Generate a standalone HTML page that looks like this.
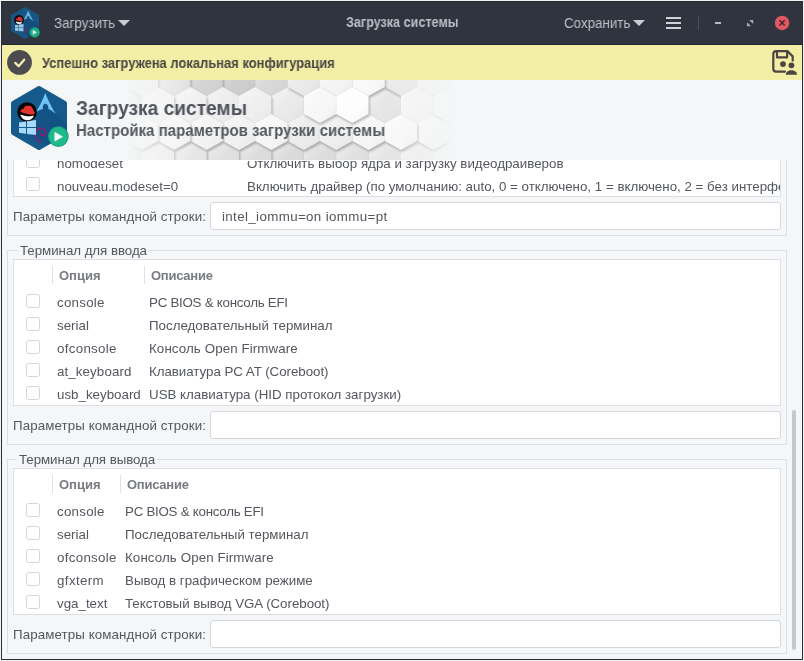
<!DOCTYPE html>
<html lang="ru">
<head>
<meta charset="utf-8">
<title>Загрузка системы</title>
<style>
html,body{margin:0;padding:0;}
body{width:804px;height:661px;overflow:hidden;background:#f1f2f4;font-family:"Liberation Sans",sans-serif;font-size:13.33px;color:#54575e;position:relative;}
.abs,.t{position:absolute;}
.t{will-change:transform;white-space:nowrap;line-height:16px;height:16px;transform-origin:0 50%;}
.b{font-weight:bold;}
#win{position:absolute;left:1px;top:1px;width:802px;height:659px;background:#f5f6f7;overflow:hidden;}
#winborder{position:absolute;left:1px;top:1px;width:800px;height:657px;border:1px solid #292c35;border-top-color:#252830;pointer-events:none;z-index:50;}
#titlebar{position:absolute;left:1px;top:1px;width:802px;height:44px;background:#2f343f;}
#titlebar .t{color:#bec1c7;font-size:14px;}
#info{position:absolute;left:2px;top:45px;width:800px;height:35px;background:#f3eea6;}
#banner{position:absolute;left:2px;top:80px;width:800px;height:80px;background:#f5f6f7;overflow:hidden;}
#view{position:absolute;left:2px;top:160px;width:800px;height:499px;background:#f5f6f7;overflow:hidden;}
.frame{position:absolute;border:1px solid #dcdfe3;box-sizing:border-box;}
.tree{position:absolute;background:#fff;border:1px solid #dcdfe3;box-sizing:border-box;overflow:hidden;}
.entry{position:absolute;background:#fff;border:1px solid #d3d6db;border-radius:3px;box-sizing:border-box;}
.cb{position:absolute;width:14px;height:14px;box-sizing:border-box;border:1px solid #d4d6da;border-radius:2.5px;background:#fefefe;}
.hd{color:#787b82;font-weight:bold;font-size:13px;}
.sep{position:absolute;width:1px;background:#dfe1e5;}
.lbl{background:#f5f6f7;padding:0 2px;}
</style>
</head>
<body>
<div id="win"></div>


<!-- ===== title bar ===== -->
<div id="titlebar">
  <svg class="abs" style="left:8px;top:6px;opacity:.9" width="32" height="32" viewBox="0 0 64 64">
   <path d="M32 2.2 L57.8 17.2 V46.8 L32 61.8 L6.2 46.8 V17.2 Z" fill="#165a8b" stroke="#165a8b" stroke-width="4.4" stroke-linejoin="round"/>
   <path d="M38.5 17 L60 38 V48 L40 59.6 L22 48.6 L29 25 Z" fill="#114f7d" opacity="0.55"/>
   <!-- arch -->
   <path d="M38.2 7 C36.2 13 33 19.5 29 26 C31.600 24.600 33.800 23.600 35.900 23.100 C35.300 19.800 36.800 17.800 38.400 17.800 C40 17.800 41.700 19.800 41.400 23.100 C43.6 23.8 46 25.6 48.6 27.8 C44.6 21 41 14 38.2 7 Z" fill="#6fc3f7"/>
   <!-- red hat -->
   <circle cx="20" cy="26" r="9.8" fill="#0b0709"/>
   <path d="M13.4 25.6 C13.8 23.4 15.6 22.4 16.9 22.8 C17.1 20.5 19 19.4 20.8 19.9 C22.9 19.2 25.1 20.3 25.7 22.7 C26.3 24.5 27.1 25.7 28.2 26.7 C27.3 28.6 24.400 29 22 28.300 C19 27.600 15.500 27.100 13.400 25.600 Z" fill="#e8322d"/>
   <path d="M13.300 28.800 C15.600 28.900 18 30.100 20.400 30.300 C22.800 30.500 25.200 29.900 26.900 29.500 C26.200 32.300 23.600 34.300 20.400 34.300 C17 34.300 14.300 32.100 13.300 28.800 Z" fill="#fbfbfb"/>
   <!-- windows -->
   <path d="M12 36.4 L19 35.4 V41 H12 Z M20 35.2 L29 34 V41 H20 Z M12 42 H19 V47.8 L12 46.8 Z M20 42 H29 V49 L20 47.9 Z" fill="#a9d9f9"/>
   <!-- debian -->
   <path d="M29.8 44.8 C31 42.2 35.4 41.4 37.6 43.6 C39.6 45.6 38.6 49.2 36.2 49.6 C34.6 49.8 33.6 48.4 34.4 47.2" fill="none" stroke="#8c1f6c" stroke-width="1.6" stroke-linecap="round"/>
   <path d="M28.6 49.4 C29.4 52.6 31.2 55 33.6 56.4" fill="none" stroke="#8a2170" stroke-width="1.5" stroke-linecap="round"/>
   <!-- play -->
   <circle cx="51.4" cy="50.6" r="10.3" fill="#1aa57c"/>
   <circle cx="51.4" cy="50.6" r="9.3" fill="#20b98b"/>
   <path d="M47.9 46.5 V54.9 L55.4 50.7 Z" fill="#f2fffb" stroke="#f2fffb" stroke-width="0.8" stroke-linejoin="round"/>
  </svg>
  <div class="t" style="left:53px;top:14px;transform:scaleX(.955);">Загрузить</div>
  <svg class="abs" style="left:116px;top:18px" width="14" height="8" viewBox="0 0 14 8"><path d="M1 1h12l-6 6z" fill="#c9ccd1"/></svg>
  <div class="t b" style="left:344.6px;top:13px;color:#bcbfc7;transform:scaleX(.9);">Загрузка системы</div>
  <div class="t" style="left:562.8px;top:14px;transform:scaleX(.955);">Сохранить</div>
  <svg class="abs" style="left:631px;top:18px" width="14" height="8" viewBox="0 0 14 8"><path d="M1 1h12l-6 6z" fill="#c9ccd1"/></svg>
  <div class="abs" style="left:665px;top:16px;width:15px;height:2px;background:#cfd2d7;"></div>
  <div class="abs" style="left:665px;top:21px;width:15px;height:2px;background:#cfd2d7;"></div>
  <div class="abs" style="left:665px;top:26px;width:15px;height:2px;background:#cfd2d7;"></div>
  <div class="abs" style="left:697px;top:15px;width:1px;height:14px;background:#4b505c;"></div>
  <div class="abs" style="left:714px;top:21px;width:6px;height:2px;background:#b8bbc2;"></div>
  <svg class="abs" style="left:746px;top:19px" width="7" height="7" viewBox="0 0 7 7"><path d="M2.2 0H6.2V4z M0 2.300V6.300H4z" fill="#a9acb3"/></svg>
  <svg class="abs" style="left:773px;top:14px" width="16" height="16" viewBox="0 0 16 16"><circle cx="8.100" cy="7.900" r="7.250" fill="#de5964"/><path d="M5.500 5.300l5.200 5.200M10.700 5.300l-5.200 5.200" stroke="#45282d" stroke-width="1.500"/></svg>
</div>

<div class="abs" style="left:1px;top:44px;width:802px;height:1px;background:#22252c;"></div>
<!-- ===== info bar ===== -->
<div id="info">
  <svg class="abs" style="left:766px;top:2px" width="32" height="32" viewBox="768 47 32 32">
    <path d="M785 71.6H776.2Q773.3 71.600 773.3 68.700V54Q773.300 51.100 776.200 51.100H787.400L792.700 56.400V60.600" fill="none" stroke="#4a4541" stroke-width="2.2" stroke-linecap="round" stroke-linejoin="round"/>
    <path d="M777 51.2V57.400H787.100V51.200" fill="none" stroke="#4a4541" stroke-width="2.2" stroke-linejoin="round"/>
    <circle cx="783" cy="64.100" r="2.9" fill="#4a4541"/>
    <circle cx="791.400" cy="65.300" r="2.9" fill="#4a4541"/>
    <path d="M785.800 74.800C785.800 71.800 788.300 70.200 791.400 70.200C794.500 70.200 797 71.800 797 74.800Z" fill="#4a4541"/>
  </svg>
  <svg class="abs" style="left:5px;top:5px" width="26" height="26" viewBox="0 0 26 26"><circle cx="12.500" cy="12.450" r="12.400" fill="#4c4b50"/><path d="M8.300 12.900l3.300 3.300 5.600-6.500" fill="none" stroke="#f6f1b4" stroke-width="2.200" stroke-linecap="round" stroke-linejoin="round"/></svg>
  <div class="t b" style="left:40px;top:9.6px;font-size:14px;color:#4a4642;transform:scaleX(.925);">Успешно загружена локальная конфигурация</div>
</div>

<!-- ===== banner ===== -->
<div id="banner">
<!--HEX--><svg class="abs" style="left:0;top:0" width="800" height="80" viewBox="0 0 800 80">
<defs><linearGradient id="hg" x1="0" y1="0" x2="1" y2="1"><stop offset="0" stop-color="#fff" stop-opacity=".5"/><stop offset=".5" stop-color="#fff" stop-opacity="0"/><stop offset="1" stop-color="#000" stop-opacity=".05"/></linearGradient>
<linearGradient id="hfade" x1="0" y1="0" x2="1" y2="0"><stop offset="0" stop-color="#000"/><stop offset=".155" stop-color="#000"/><stop offset=".24" stop-color="#fff"/><stop offset=".485" stop-color="#fff"/><stop offset=".565" stop-color="#000"/><stop offset="1" stop-color="#000"/></linearGradient>
<mask id="hm" maskUnits="userSpaceOnUse" x="0" y="0" width="800" height="80"><rect width="800" height="80" fill="url(#hfade)"/></mask>
<filter id="hb" x="-20%" y="-20%" width="140%" height="140%"><feGaussianBlur stdDeviation=".8"/></filter></defs>
<g mask="url(#hm)"><rect width="800" height="80" fill="#e4e4e4"/>
<path d="M237.0 -20.0 L253.2 -11.0 L253.2 7.0 L237.0 16.0 L220.8 7.0 L220.8 -11.0Z" transform="translate(1.2 2.0)" fill="#000" opacity=".25" filter="url(#hb)"/>
<path d="M237.0 -20.0 L253.2 -11.0 L253.2 7.0 L237.0 16.0 L220.8 7.0 L220.8 -11.0Z" fill="rgb(206,206,206)"/><path d="M237.0 -20.0 L253.2 -11.0 L253.2 7.0 L237.0 16.0 L220.8 7.0 L220.8 -11.0Z" fill="url(#hg)"/>
<path d="M204.6 -20.0 L220.8 -11.0 L220.8 7.0 L204.6 16.0 L188.4 7.0 L188.4 -11.0Z" transform="translate(1.2 2.0)" fill="#000" opacity=".25" filter="url(#hb)"/>
<path d="M204.6 -20.0 L220.8 -11.0 L220.8 7.0 L204.6 16.0 L188.4 7.0 L188.4 -11.0Z" fill="rgb(212,212,212)"/><path d="M204.6 -20.0 L220.8 -11.0 L220.8 7.0 L204.6 16.0 L188.4 7.0 L188.4 -11.0Z" fill="url(#hg)"/>
<path d="M269.4 -20.0 L285.6 -11.0 L285.6 7.0 L269.4 16.0 L253.2 7.0 L253.2 -11.0Z" transform="translate(1.2 2.0)" fill="#000" opacity=".25" filter="url(#hb)"/>
<path d="M269.4 -20.0 L285.6 -11.0 L285.6 7.0 L269.4 16.0 L253.2 7.0 L253.2 -11.0Z" fill="rgb(216,216,216)"/><path d="M269.4 -20.0 L285.6 -11.0 L285.6 7.0 L269.4 16.0 L253.2 7.0 L253.2 -11.0Z" fill="url(#hg)"/>
<path d="M285.6 61.0 L301.8 70.0 L301.8 88.0 L285.6 97.0 L269.4 88.0 L269.4 70.0Z" transform="translate(1.2 2.0)" fill="#000" opacity=".25" filter="url(#hb)"/>
<path d="M285.6 61.0 L301.8 70.0 L301.8 88.0 L285.6 97.0 L269.4 88.0 L269.4 70.0Z" fill="rgb(218,218,218)"/><path d="M285.6 61.0 L301.8 70.0 L301.8 88.0 L285.6 97.0 L269.4 88.0 L269.4 70.0Z" fill="url(#hg)"/>
<path d="M253.2 61.0 L269.4 70.0 L269.4 88.0 L253.2 97.0 L237.0 88.0 L237.0 70.0Z" transform="translate(1.2 2.0)" fill="#000" opacity=".25" filter="url(#hb)"/>
<path d="M253.2 61.0 L269.4 70.0 L269.4 88.0 L253.2 97.0 L237.0 88.0 L237.0 70.0Z" fill="rgb(220,220,220)"/><path d="M253.2 61.0 L269.4 70.0 L269.4 88.0 L253.2 97.0 L237.0 88.0 L237.0 70.0Z" fill="url(#hg)"/>
<path d="M318.0 61.0 L334.2 70.0 L334.2 88.0 L318.0 97.0 L301.8 88.0 L301.8 70.0Z" transform="translate(1.2 2.0)" fill="#000" opacity=".25" filter="url(#hb)"/>
<path d="M318.0 61.0 L334.2 70.0 L334.2 88.0 L318.0 97.0 L301.8 88.0 L301.8 70.0Z" fill="rgb(220,220,220)"/><path d="M318.0 61.0 L334.2 70.0 L334.2 88.0 L318.0 97.0 L301.8 88.0 L301.8 70.0Z" fill="url(#hg)"/>
<path d="M220.8 61.0 L237.0 70.0 L237.0 88.0 L220.8 97.0 L204.6 88.0 L204.6 70.0Z" transform="translate(1.2 2.0)" fill="#000" opacity=".25" filter="url(#hb)"/>
<path d="M220.8 61.0 L237.0 70.0 L237.0 88.0 L220.8 97.0 L204.6 88.0 L204.6 70.0Z" fill="rgb(224,224,224)"/><path d="M220.8 61.0 L237.0 70.0 L237.0 88.0 L220.8 97.0 L204.6 88.0 L204.6 70.0Z" fill="url(#hg)"/>
<path d="M350.4 61.0 L366.6 70.0 L366.6 88.0 L350.4 97.0 L334.2 88.0 L334.2 70.0Z" transform="translate(1.2 2.0)" fill="#000" opacity=".25" filter="url(#hb)"/>
<path d="M350.4 61.0 L366.6 70.0 L366.6 88.0 L350.4 97.0 L334.2 88.0 L334.2 70.0Z" fill="rgb(224,224,224)"/><path d="M350.4 61.0 L366.6 70.0 L366.6 88.0 L350.4 97.0 L334.2 88.0 L334.2 70.0Z" fill="url(#hg)"/>
<path d="M172.2 -20.0 L188.4 -11.0 L188.4 7.0 L172.2 16.0 L156.0 7.0 L156.0 -11.0Z" transform="translate(1.2 2.0)" fill="#000" opacity=".25" filter="url(#hb)"/>
<path d="M172.2 -20.0 L188.4 -11.0 L188.4 7.0 L172.2 16.0 L156.0 7.0 L156.0 -11.0Z" fill="rgb(226,226,226)"/><path d="M172.2 -20.0 L188.4 -11.0 L188.4 7.0 L172.2 16.0 L156.0 7.0 L156.0 -11.0Z" fill="url(#hg)"/>
<path d="M382.8 61.0 L399.0 70.0 L399.0 88.0 L382.8 97.0 L366.6 88.0 L366.6 70.0Z" transform="translate(1.2 2.0)" fill="#000" opacity=".25" filter="url(#hb)"/>
<path d="M382.8 61.0 L399.0 70.0 L399.0 88.0 L382.8 97.0 L366.6 88.0 L366.6 70.0Z" fill="rgb(228,228,228)"/><path d="M382.8 61.0 L399.0 70.0 L399.0 88.0 L382.8 97.0 L366.6 88.0 L366.6 70.0Z" fill="url(#hg)"/>
<path d="M188.4 61.0 L204.6 70.0 L204.6 88.0 L188.4 97.0 L172.2 88.0 L172.2 70.0Z" transform="translate(1.2 2.0)" fill="#000" opacity=".25" filter="url(#hb)"/>
<path d="M188.4 61.0 L204.6 70.0 L204.6 88.0 L188.4 97.0 L172.2 88.0 L172.2 70.0Z" fill="rgb(230,230,230)"/><path d="M188.4 61.0 L204.6 70.0 L204.6 88.0 L188.4 97.0 L172.2 88.0 L172.2 70.0Z" fill="url(#hg)"/>
<path d="M382.8 7.0 L399.0 16.0 L399.0 34.0 L382.8 43.0 L366.6 34.0 L366.6 16.0Z" transform="translate(1.2 2.0)" fill="#000" opacity=".25" filter="url(#hb)"/>
<path d="M382.8 7.0 L399.0 16.0 L399.0 34.0 L382.8 43.0 L366.6 34.0 L366.6 16.0Z" fill="rgb(230,230,230)"/><path d="M382.8 7.0 L399.0 16.0 L399.0 34.0 L382.8 43.0 L366.6 34.0 L366.6 16.0Z" fill="url(#hg)"/>
<path d="M399.0 -20.0 L415.2 -11.0 L415.2 7.0 L399.0 16.0 L382.8 7.0 L382.8 -11.0Z" transform="translate(1.2 2.0)" fill="#000" opacity=".25" filter="url(#hb)"/>
<path d="M399.0 -20.0 L415.2 -11.0 L415.2 7.0 L399.0 16.0 L382.8 7.0 L382.8 -11.0Z" fill="rgb(232,232,232)"/><path d="M399.0 -20.0 L415.2 -11.0 L415.2 7.0 L399.0 16.0 L382.8 7.0 L382.8 -11.0Z" fill="url(#hg)"/>
<path d="M285.6 7.0 L301.8 16.0 L301.8 34.0 L285.6 43.0 L269.4 34.0 L269.4 16.0Z" transform="translate(1.2 2.0)" fill="#000" opacity=".25" filter="url(#hb)"/>
<path d="M285.6 7.0 L301.8 16.0 L301.8 34.0 L285.6 43.0 L269.4 34.0 L269.4 16.0Z" fill="rgb(234,234,234)"/><path d="M285.6 7.0 L301.8 16.0 L301.8 34.0 L285.6 43.0 L269.4 34.0 L269.4 16.0Z" fill="url(#hg)"/>
<path d="M301.8 -20.0 L318.0 -11.0 L318.0 7.0 L301.8 16.0 L285.6 7.0 L285.6 -11.0Z" transform="translate(1.2 2.0)" fill="#000" opacity=".25" filter="url(#hb)"/>
<path d="M301.8 -20.0 L318.0 -11.0 L318.0 7.0 L301.8 16.0 L285.6 7.0 L285.6 -11.0Z" fill="rgb(234,234,234)"/><path d="M301.8 -20.0 L318.0 -11.0 L318.0 7.0 L301.8 16.0 L285.6 7.0 L285.6 -11.0Z" fill="url(#hg)"/>
<path d="M415.2 61.0 L431.4 70.0 L431.4 88.0 L415.2 97.0 L399.0 88.0 L399.0 70.0Z" transform="translate(1.2 2.0)" fill="#000" opacity=".25" filter="url(#hb)"/>
<path d="M415.2 61.0 L431.4 70.0 L431.4 88.0 L415.2 97.0 L399.0 88.0 L399.0 70.0Z" fill="rgb(234,234,234)"/><path d="M415.2 61.0 L431.4 70.0 L431.4 88.0 L415.2 97.0 L399.0 88.0 L399.0 70.0Z" fill="url(#hg)"/>
<path d="M301.8 34.0 L318.0 43.0 L318.0 61.0 L301.8 70.0 L285.6 61.0 L285.6 43.0Z" transform="translate(1.2 2.0)" fill="#000" opacity=".25" filter="url(#hb)"/>
<path d="M301.8 34.0 L318.0 43.0 L318.0 61.0 L301.8 70.0 L285.6 61.0 L285.6 43.0Z" fill="rgb(236,236,236)"/><path d="M301.8 34.0 L318.0 43.0 L318.0 61.0 L301.8 70.0 L285.6 61.0 L285.6 43.0Z" fill="url(#hg)"/>
<path d="M220.8 7.0 L237.0 16.0 L237.0 34.0 L220.8 43.0 L204.6 34.0 L204.6 16.0Z" transform="translate(1.2 2.0)" fill="#000" opacity=".25" filter="url(#hb)"/>
<path d="M220.8 7.0 L237.0 16.0 L237.0 34.0 L220.8 43.0 L204.6 34.0 L204.6 16.0Z" fill="rgb(237,237,237)"/><path d="M220.8 7.0 L237.0 16.0 L237.0 34.0 L220.8 43.0 L204.6 34.0 L204.6 16.0Z" fill="url(#hg)"/>
<path d="M156.0 61.0 L172.2 70.0 L172.2 88.0 L156.0 97.0 L139.8 88.0 L139.8 70.0Z" transform="translate(1.2 2.0)" fill="#000" opacity=".25" filter="url(#hb)"/>
<path d="M156.0 61.0 L172.2 70.0 L172.2 88.0 L156.0 97.0 L139.8 88.0 L139.8 70.0Z" fill="rgb(238,238,238)"/><path d="M156.0 61.0 L172.2 70.0 L172.2 88.0 L156.0 97.0 L139.8 88.0 L139.8 70.0Z" fill="url(#hg)"/>
<path d="M253.2 7.0 L269.4 16.0 L269.4 34.0 L253.2 43.0 L237.0 34.0 L237.0 16.0Z" transform="translate(1.2 2.0)" fill="#000" opacity=".25" filter="url(#hb)"/>
<path d="M253.2 7.0 L269.4 16.0 L269.4 34.0 L253.2 43.0 L237.0 34.0 L237.0 16.0Z" fill="rgb(239,239,239)"/><path d="M253.2 7.0 L269.4 16.0 L269.4 34.0 L253.2 43.0 L237.0 34.0 L237.0 16.0Z" fill="url(#hg)"/>
<path d="M334.2 34.0 L350.4 43.0 L350.4 61.0 L334.2 70.0 L318.0 61.0 L318.0 43.0Z" transform="translate(1.2 2.0)" fill="#000" opacity=".25" filter="url(#hb)"/>
<path d="M334.2 34.0 L350.4 43.0 L350.4 61.0 L334.2 70.0 L318.0 61.0 L318.0 43.0Z" fill="rgb(239,239,239)"/><path d="M334.2 34.0 L350.4 43.0 L350.4 61.0 L334.2 70.0 L318.0 61.0 L318.0 43.0Z" fill="url(#hg)"/>
<path d="M139.8 -20.0 L156.0 -11.0 L156.0 7.0 L139.8 16.0 L123.6 7.0 L123.6 -11.0Z" transform="translate(1.2 2.0)" fill="#000" opacity=".25" filter="url(#hb)"/>
<path d="M139.8 -20.0 L156.0 -11.0 L156.0 7.0 L139.8 16.0 L123.6 7.0 L123.6 -11.0Z" fill="rgb(240,240,240)"/><path d="M139.8 -20.0 L156.0 -11.0 L156.0 7.0 L139.8 16.0 L123.6 7.0 L123.6 -11.0Z" fill="url(#hg)"/>
<path d="M188.4 7.0 L204.6 16.0 L204.6 34.0 L188.4 43.0 L172.2 34.0 L172.2 16.0Z" transform="translate(1.2 2.0)" fill="#000" opacity=".25" filter="url(#hb)"/>
<path d="M188.4 7.0 L204.6 16.0 L204.6 34.0 L188.4 43.0 L172.2 34.0 L172.2 16.0Z" fill="rgb(240,240,240)"/><path d="M188.4 7.0 L204.6 16.0 L204.6 34.0 L188.4 43.0 L172.2 34.0 L172.2 16.0Z" fill="url(#hg)"/>
<path d="M431.4 -20.0 L447.6 -11.0 L447.6 7.0 L431.4 16.0 L415.2 7.0 L415.2 -11.0Z" transform="translate(1.2 2.0)" fill="#000" opacity=".25" filter="url(#hb)"/>
<path d="M431.4 -20.0 L447.6 -11.0 L447.6 7.0 L431.4 16.0 L415.2 7.0 L415.2 -11.0Z" fill="rgb(240,240,240)"/><path d="M431.4 -20.0 L447.6 -11.0 L447.6 7.0 L431.4 16.0 L415.2 7.0 L415.2 -11.0Z" fill="url(#hg)"/>
<path d="M447.6 61.0 L463.8 70.0 L463.8 88.0 L447.6 97.0 L431.4 88.0 L431.4 70.0Z" transform="translate(1.2 2.0)" fill="#000" opacity=".25" filter="url(#hb)"/>
<path d="M447.6 61.0 L463.8 70.0 L463.8 88.0 L447.6 97.0 L431.4 88.0 L431.4 70.0Z" fill="rgb(240,240,240)"/><path d="M447.6 61.0 L463.8 70.0 L463.8 88.0 L447.6 97.0 L431.4 88.0 L431.4 70.0Z" fill="url(#hg)"/>
<path d="M237.0 34.0 L253.2 43.0 L253.2 61.0 L237.0 70.0 L220.8 61.0 L220.8 43.0Z" transform="translate(1.2 2.0)" fill="#000" opacity=".25" filter="url(#hb)"/>
<path d="M237.0 34.0 L253.2 43.0 L253.2 61.0 L237.0 70.0 L220.8 61.0 L220.8 43.0Z" fill="rgb(241,241,241)"/><path d="M237.0 34.0 L253.2 43.0 L253.2 61.0 L237.0 70.0 L220.8 61.0 L220.8 43.0Z" fill="url(#hg)"/>
<path d="M204.6 34.0 L220.8 43.0 L220.8 61.0 L204.6 70.0 L188.4 61.0 L188.4 43.0Z" transform="translate(1.2 2.0)" fill="#000" opacity=".25" filter="url(#hb)"/>
<path d="M204.6 34.0 L220.8 43.0 L220.8 61.0 L204.6 70.0 L188.4 61.0 L188.4 43.0Z" fill="rgb(243,243,243)"/><path d="M204.6 34.0 L220.8 43.0 L220.8 61.0 L204.6 70.0 L188.4 61.0 L188.4 43.0Z" fill="url(#hg)"/>
<path d="M415.2 7.0 L431.4 16.0 L431.4 34.0 L415.2 43.0 L399.0 34.0 L399.0 16.0Z" transform="translate(1.2 2.0)" fill="#000" opacity=".25" filter="url(#hb)"/>
<path d="M415.2 7.0 L431.4 16.0 L431.4 34.0 L415.2 43.0 L399.0 34.0 L399.0 16.0Z" fill="rgb(243,243,243)"/><path d="M415.2 7.0 L431.4 16.0 L431.4 34.0 L415.2 43.0 L399.0 34.0 L399.0 16.0Z" fill="url(#hg)"/>
<path d="M156.0 7.0 L172.2 16.0 L172.2 34.0 L156.0 43.0 L139.8 34.0 L139.8 16.0Z" transform="translate(1.2 2.0)" fill="#000" opacity=".25" filter="url(#hb)"/>
<path d="M156.0 7.0 L172.2 16.0 L172.2 34.0 L156.0 43.0 L139.8 34.0 L139.8 16.0Z" fill="rgb(244,244,244)"/><path d="M156.0 7.0 L172.2 16.0 L172.2 34.0 L156.0 43.0 L139.8 34.0 L139.8 16.0Z" fill="url(#hg)"/>
<path d="M334.2 -20.0 L350.4 -11.0 L350.4 7.0 L334.2 16.0 L318.0 7.0 L318.0 -11.0Z" transform="translate(1.2 2.0)" fill="#000" opacity=".25" filter="url(#hb)"/>
<path d="M334.2 -20.0 L350.4 -11.0 L350.4 7.0 L334.2 16.0 L318.0 7.0 L318.0 -11.0Z" fill="rgb(244,244,244)"/><path d="M334.2 -20.0 L350.4 -11.0 L350.4 7.0 L334.2 16.0 L318.0 7.0 L318.0 -11.0Z" fill="url(#hg)"/>
<path d="M480.0 61.0 L496.2 70.0 L496.2 88.0 L480.0 97.0 L463.8 88.0 L463.8 70.0Z" transform="translate(1.2 2.0)" fill="#000" opacity=".25" filter="url(#hb)"/>
<path d="M480.0 61.0 L496.2 70.0 L496.2 88.0 L480.0 97.0 L463.8 88.0 L463.8 70.0Z" fill="rgb(244,244,244)"/><path d="M480.0 61.0 L496.2 70.0 L496.2 88.0 L480.0 97.0 L463.8 88.0 L463.8 70.0Z" fill="url(#hg)"/>
<path d="M172.2 34.0 L188.4 43.0 L188.4 61.0 L172.2 70.0 L156.0 61.0 L156.0 43.0Z" transform="translate(1.2 2.0)" fill="#000" opacity=".25" filter="url(#hb)"/>
<path d="M172.2 34.0 L188.4 43.0 L188.4 61.0 L172.2 70.0 L156.0 61.0 L156.0 43.0Z" fill="rgb(246,246,246)"/><path d="M172.2 34.0 L188.4 43.0 L188.4 61.0 L172.2 70.0 L156.0 61.0 L156.0 43.0Z" fill="url(#hg)"/>
<path d="M269.4 34.0 L285.6 43.0 L285.6 61.0 L269.4 70.0 L253.2 61.0 L253.2 43.0Z" transform="translate(1.2 2.0)" fill="#000" opacity=".25" filter="url(#hb)"/>
<path d="M269.4 34.0 L285.6 43.0 L285.6 61.0 L269.4 70.0 L253.2 61.0 L253.2 43.0Z" fill="rgb(246,246,246)"/><path d="M269.4 34.0 L285.6 43.0 L285.6 61.0 L269.4 70.0 L253.2 61.0 L253.2 43.0Z" fill="url(#hg)"/>
<path d="M366.6 34.0 L382.8 43.0 L382.8 61.0 L366.6 70.0 L350.4 61.0 L350.4 43.0Z" transform="translate(1.2 2.0)" fill="#000" opacity=".25" filter="url(#hb)"/>
<path d="M366.6 34.0 L382.8 43.0 L382.8 61.0 L366.6 70.0 L350.4 61.0 L350.4 43.0Z" fill="rgb(246,246,246)"/><path d="M366.6 34.0 L382.8 43.0 L382.8 61.0 L366.6 70.0 L350.4 61.0 L350.4 43.0Z" fill="url(#hg)"/>
<path d="M431.4 34.0 L447.6 43.0 L447.6 61.0 L431.4 70.0 L415.2 61.0 L415.2 43.0Z" transform="translate(1.2 2.0)" fill="#000" opacity=".25" filter="url(#hb)"/>
<path d="M431.4 34.0 L447.6 43.0 L447.6 61.0 L431.4 70.0 L415.2 61.0 L415.2 43.0Z" fill="rgb(246,246,246)"/><path d="M431.4 34.0 L447.6 43.0 L447.6 61.0 L431.4 70.0 L415.2 61.0 L415.2 43.0Z" fill="url(#hg)"/>
<path d="M463.8 -20.0 L480.0 -11.0 L480.0 7.0 L463.8 16.0 L447.6 7.0 L447.6 -11.0Z" transform="translate(1.2 2.0)" fill="#000" opacity=".25" filter="url(#hb)"/>
<path d="M463.8 -20.0 L480.0 -11.0 L480.0 7.0 L463.8 16.0 L447.6 7.0 L447.6 -11.0Z" fill="rgb(246,246,246)"/><path d="M463.8 -20.0 L480.0 -11.0 L480.0 7.0 L463.8 16.0 L447.6 7.0 L447.6 -11.0Z" fill="url(#hg)"/>
<path d="M496.2 -20.0 L512.4 -11.0 L512.4 7.0 L496.2 16.0 L480.0 7.0 L480.0 -11.0Z" transform="translate(1.2 2.0)" fill="#000" opacity=".25" filter="url(#hb)"/>
<path d="M496.2 -20.0 L512.4 -11.0 L512.4 7.0 L496.2 16.0 L480.0 7.0 L480.0 -11.0Z" fill="rgb(246,246,246)"/><path d="M496.2 -20.0 L512.4 -11.0 L512.4 7.0 L496.2 16.0 L480.0 7.0 L480.0 -11.0Z" fill="url(#hg)"/>
<path d="M512.4 61.0 L528.6 70.0 L528.6 88.0 L512.4 97.0 L496.2 88.0 L496.2 70.0Z" transform="translate(1.2 2.0)" fill="#000" opacity=".25" filter="url(#hb)"/>
<path d="M512.4 61.0 L528.6 70.0 L528.6 88.0 L512.4 97.0 L496.2 88.0 L496.2 70.0Z" fill="rgb(246,246,246)"/><path d="M512.4 61.0 L528.6 70.0 L528.6 88.0 L512.4 97.0 L496.2 88.0 L496.2 70.0Z" fill="url(#hg)"/>
<path d="M318.0 7.0 L334.2 16.0 L334.2 34.0 L318.0 43.0 L301.8 34.0 L301.8 16.0Z" transform="translate(1.2 2.0)" fill="#000" opacity=".25" filter="url(#hb)"/>
<path d="M318.0 7.0 L334.2 16.0 L334.2 34.0 L318.0 43.0 L301.8 34.0 L301.8 16.0Z" fill="rgb(247,247,247)"/><path d="M318.0 7.0 L334.2 16.0 L334.2 34.0 L318.0 43.0 L301.8 34.0 L301.8 16.0Z" fill="url(#hg)"/>
<path d="M447.6 7.0 L463.8 16.0 L463.8 34.0 L447.6 43.0 L431.4 34.0 L431.4 16.0Z" transform="translate(1.2 2.0)" fill="#000" opacity=".25" filter="url(#hb)"/>
<path d="M447.6 7.0 L463.8 16.0 L463.8 34.0 L447.6 43.0 L431.4 34.0 L431.4 16.0Z" fill="rgb(247,247,247)"/><path d="M447.6 7.0 L463.8 16.0 L463.8 34.0 L447.6 43.0 L431.4 34.0 L431.4 16.0Z" fill="url(#hg)"/>
<path d="M463.8 34.0 L480.0 43.0 L480.0 61.0 L463.8 70.0 L447.6 61.0 L447.6 43.0Z" transform="translate(1.2 2.0)" fill="#000" opacity=".25" filter="url(#hb)"/>
<path d="M463.8 34.0 L480.0 43.0 L480.0 61.0 L463.8 70.0 L447.6 61.0 L447.6 43.0Z" fill="rgb(247,247,247)"/><path d="M463.8 34.0 L480.0 43.0 L480.0 61.0 L463.8 70.0 L447.6 61.0 L447.6 43.0Z" fill="url(#hg)"/>
<path d="M480.0 7.0 L496.2 16.0 L496.2 34.0 L480.0 43.0 L463.8 34.0 L463.8 16.0Z" transform="translate(1.2 2.0)" fill="#000" opacity=".25" filter="url(#hb)"/>
<path d="M480.0 7.0 L496.2 16.0 L496.2 34.0 L480.0 43.0 L463.8 34.0 L463.8 16.0Z" fill="rgb(247,247,247)"/><path d="M480.0 7.0 L496.2 16.0 L496.2 34.0 L480.0 43.0 L463.8 34.0 L463.8 16.0Z" fill="url(#hg)"/>
<path d="M496.2 34.0 L512.4 43.0 L512.4 61.0 L496.2 70.0 L480.0 61.0 L480.0 43.0Z" transform="translate(1.2 2.0)" fill="#000" opacity=".25" filter="url(#hb)"/>
<path d="M496.2 34.0 L512.4 43.0 L512.4 61.0 L496.2 70.0 L480.0 61.0 L480.0 43.0Z" fill="rgb(247,247,247)"/><path d="M496.2 34.0 L512.4 43.0 L512.4 61.0 L496.2 70.0 L480.0 61.0 L480.0 43.0Z" fill="url(#hg)"/>
<path d="M512.4 7.0 L528.6 16.0 L528.6 34.0 L512.4 43.0 L496.2 34.0 L496.2 16.0Z" transform="translate(1.2 2.0)" fill="#000" opacity=".25" filter="url(#hb)"/>
<path d="M512.4 7.0 L528.6 16.0 L528.6 34.0 L512.4 43.0 L496.2 34.0 L496.2 16.0Z" fill="rgb(247,247,247)"/><path d="M512.4 7.0 L528.6 16.0 L528.6 34.0 L512.4 43.0 L496.2 34.0 L496.2 16.0Z" fill="url(#hg)"/>
<path d="M139.8 34.0 L156.0 43.0 L156.0 61.0 L139.8 70.0 L123.6 61.0 L123.6 43.0Z" transform="translate(1.2 2.0)" fill="#000" opacity=".25" filter="url(#hb)"/>
<path d="M139.8 34.0 L156.0 43.0 L156.0 61.0 L139.8 70.0 L123.6 61.0 L123.6 43.0Z" fill="rgb(248,248,248)"/><path d="M139.8 34.0 L156.0 43.0 L156.0 61.0 L139.8 70.0 L123.6 61.0 L123.6 43.0Z" fill="url(#hg)"/>
<path d="M399.0 34.0 L415.2 43.0 L415.2 61.0 L399.0 70.0 L382.8 61.0 L382.8 43.0Z" transform="translate(1.2 2.0)" fill="#000" opacity=".25" filter="url(#hb)"/>
<path d="M399.0 34.0 L415.2 43.0 L415.2 61.0 L399.0 70.0 L382.8 61.0 L382.8 43.0Z" fill="rgb(248,248,248)"/><path d="M399.0 34.0 L415.2 43.0 L415.2 61.0 L399.0 70.0 L382.8 61.0 L382.8 43.0Z" fill="url(#hg)"/>
<path d="M366.6 -20.0 L382.8 -11.0 L382.8 7.0 L366.6 16.0 L350.4 7.0 L350.4 -11.0Z" transform="translate(1.2 2.0)" fill="#000" opacity=".25" filter="url(#hb)"/>
<path d="M366.6 -20.0 L382.8 -11.0 L382.8 7.0 L366.6 16.0 L350.4 7.0 L350.4 -11.0Z" fill="rgb(249,249,249)"/><path d="M366.6 -20.0 L382.8 -11.0 L382.8 7.0 L366.6 16.0 L350.4 7.0 L350.4 -11.0Z" fill="url(#hg)"/>
<path d="M350.4 7.0 L366.6 16.0 L366.6 34.0 L350.4 43.0 L334.2 34.0 L334.2 16.0Z" transform="translate(1.2 2.0)" fill="#000" opacity=".25" filter="url(#hb)"/>
<path d="M350.4 7.0 L366.6 16.0 L366.6 34.0 L350.4 43.0 L334.2 34.0 L334.2 16.0Z" fill="rgb(253,253,253)"/><path d="M350.4 7.0 L366.6 16.0 L366.6 34.0 L350.4 43.0 L334.2 34.0 L334.2 16.0Z" fill="url(#hg)"/>
</g></svg><!--/HEX-->
  <svg class="abs" style="left:5px;top:6px;z-index:3" width="64" height="64" viewBox="0 0 64 64">
   <path d="M32 2.2 L57.8 17.2 V46.8 L32 61.8 L6.2 46.8 V17.2 Z" fill="#165a8b" stroke="#165a8b" stroke-width="4.4" stroke-linejoin="round"/>
   <path d="M38.5 17 L60 38 V48 L40 59.6 L22 48.6 L29 25 Z" fill="#114f7d" opacity="0.55"/>
   <!-- arch -->
   <path d="M38.2 7 C36.2 13 33 19.5 29 26 C31.600 24.600 33.800 23.600 35.900 23.100 C35.300 19.800 36.800 17.800 38.400 17.800 C40 17.800 41.700 19.800 41.400 23.100 C43.6 23.8 46 25.6 48.6 27.8 C44.6 21 41 14 38.2 7 Z" fill="#6fc3f7"/>
   <!-- red hat -->
   <circle cx="20" cy="26" r="9.8" fill="#0b0709"/>
   <path d="M13.4 25.6 C13.8 23.4 15.6 22.4 16.9 22.8 C17.1 20.5 19 19.4 20.8 19.9 C22.9 19.2 25.1 20.3 25.7 22.7 C26.3 24.5 27.1 25.7 28.2 26.7 C27.3 28.6 24.400 29 22 28.300 C19 27.600 15.500 27.100 13.400 25.600 Z" fill="#e8322d"/>
   <path d="M13.300 28.800 C15.600 28.900 18 30.100 20.400 30.300 C22.800 30.500 25.200 29.900 26.900 29.500 C26.200 32.300 23.600 34.300 20.400 34.300 C17 34.300 14.300 32.100 13.300 28.800 Z" fill="#fbfbfb"/>
   <!-- windows -->
   <path d="M12 36.4 L19 35.4 V41 H12 Z M20 35.2 L29 34 V41 H20 Z M12 42 H19 V47.8 L12 46.8 Z M20 42 H29 V49 L20 47.9 Z" fill="#a9d9f9"/>
   <!-- debian -->
   <path d="M29.8 44.8 C31 42.2 35.4 41.4 37.6 43.6 C39.6 45.6 38.6 49.2 36.2 49.6 C34.6 49.8 33.6 48.4 34.4 47.2" fill="none" stroke="#8c1f6c" stroke-width="1.6" stroke-linecap="round"/>
   <path d="M28.6 49.4 C29.4 52.6 31.2 55 33.6 56.4" fill="none" stroke="#8a2170" stroke-width="1.5" stroke-linecap="round"/>
   <!-- play -->
   <circle cx="51.4" cy="50.6" r="10.3" fill="#1aa57c"/>
   <circle cx="51.4" cy="50.6" r="9.3" fill="#20b98b"/>
   <path d="M47.9 46.5 V54.9 L55.4 50.7 Z" fill="#f2fffb" stroke="#f2fffb" stroke-width="0.8" stroke-linejoin="round"/>
  </svg>
  <div class="t b" style="left:73.5px;top:15.7px;font-size:20px;transform:scaleX(.958);line-height:24px;height:24px;color:#51545c;">Загрузка системы</div>
  <div class="t b" style="left:74px;top:40.7px;font-size:16px;line-height:20px;height:20px;color:#55585f;transform:scaleX(.94);">Настройка параметров загрузки системы</div>
</div>

<!-- ===== scrolled content ===== -->
<div id="view">
  <!-- coordinates inside #view: page x-2, page y-160 -->
  <div class="frame" style="left:5px;top:-60px;width:780px;height:136px;"></div>
  <div class="tree" style="left:11px;top:-40px;width:768px;height:77px;">
  </div>
  <div class="cb" style="left:24px;top:-6px;"></div>
  <div class="cb" style="left:24px;top:17px;"></div>
  <div class="t" style="left:55px;top:-4px;clip-path:inset(5px 0 0 0);">nomodeset</div>
  <div class="t" style="left:55px;top:19px;">nouveau.modeset=0</div>
  <div class="t" style="left:245px;top:-4px;clip-path:inset(5px 0 0 0);">Отключить выбор ядра и загрузку видеодрайверов</div>
  <div class="t" style="left:245px;top:19px;width:533px;overflow:hidden;">Включить драйвер (по умолчанию: auto, 0 = отключено, 1 = включено, 2 = без интерфейса)</div>
  <div class="t" style="left:11px;top:49px;letter-spacing:.1px;">Параметры командной строки:</div>
  <div class="entry" style="left:208px;top:42px;width:571px;height:28px;"></div>
  <div class="t" style="left:220px;top:49px;letter-spacing:.37px;">intel_iommu=on iommu=pt</div>

  <!-- Терминал для ввода -->
  <div class="frame" style="left:5px;top:90px;width:780px;height:195px;"></div>
  <div class="t lbl" style="left:16px;top:83px;letter-spacing:-.05px;">Терминал для ввода</div>
  <div class="tree" style="left:11px;top:99px;width:768px;height:147px;"></div>
  <div class="sep" style="left:50px;top:106px;height:18px;"></div>
  <div class="sep" style="left:142px;top:106px;height:18px;"></div>
  <div class="t hd" style="left:57px;top:108px;">Опция</div>
  <div class="t hd" style="left:149px;top:108px;letter-spacing:-.25px;">Описание</div>
  <div class="cb" style="left:24px;top:134px;"></div><div class="t" style="left:55px;top:135px;letter-spacing:0.25px;">console</div><div class="t" style="left:147px;top:135px;letter-spacing:-0.26px;">PC BIOS &amp; консоль EFI</div>
  <div class="cb" style="left:24px;top:157px;"></div><div class="t" style="left:55px;top:158px;">serial</div><div class="t" style="left:147px;top:158px;">Последовательный терминал</div>
  <div class="cb" style="left:24px;top:180px;"></div><div class="t" style="left:55px;top:181px;letter-spacing:0.3px;">ofconsole</div><div class="t" style="left:147px;top:181px;letter-spacing:0.1px;">Консоль Open Firmware</div>
  <div class="cb" style="left:24px;top:203px;"></div><div class="t" style="left:55px;top:204px;letter-spacing:0.1px;">at_keyboard</div><div class="t" style="left:147px;top:204px;letter-spacing:-0.04px;">Клавиатура PC AT (Coreboot)</div>
  <div class="cb" style="left:24px;top:226px;"></div><div class="t" style="left:55px;top:227px;">usb_keyboard</div><div class="t" style="left:147px;top:227px;">USB клавиатура (HID протокол загрузки)</div>
  <div class="t" style="left:11px;top:258px;letter-spacing:.1px;">Параметры командной строки:</div>
  <div class="entry" style="left:208px;top:251px;width:571px;height:28px;"></div>

  <!-- Терминал для вывода -->
  <div class="frame" style="left:5px;top:299px;width:780px;height:195px;"></div>
  <div class="t lbl" style="left:14.7px;top:292px;letter-spacing:-.07px;">Терминал для вывода</div>
  <div class="tree" style="left:11px;top:308px;width:768px;height:147px;"></div>
  <div class="sep" style="left:50px;top:315px;height:18px;"></div>
  <div class="sep" style="left:118px;top:315px;height:18px;"></div>
  <div class="t hd" style="left:57px;top:317px;">Опция</div>
  <div class="t hd" style="left:125px;top:317px;letter-spacing:-.25px;">Описание</div>
  <div class="cb" style="left:24px;top:343px;"></div><div class="t" style="left:55px;top:344px;letter-spacing:0.25px;">console</div><div class="t" style="left:123px;top:344px;letter-spacing:-0.26px;">PC BIOS &amp; консоль EFI</div>
  <div class="cb" style="left:24px;top:366px;"></div><div class="t" style="left:55px;top:367px;">serial</div><div class="t" style="left:123px;top:367px;">Последовательный терминал</div>
  <div class="cb" style="left:24px;top:389px;"></div><div class="t" style="left:55px;top:390px;letter-spacing:0.3px;">ofconsole</div><div class="t" style="left:123px;top:390px;letter-spacing:0.1px;">Консоль Open Firmware</div>
  <div class="cb" style="left:24px;top:412px;"></div><div class="t" style="left:55px;top:413px;letter-spacing:0.38px;">gfxterm</div><div class="t" style="left:123px;top:413px;">Вывод в графическом режиме</div>
  <div class="cb" style="left:24px;top:435px;"></div><div class="t" style="left:55px;top:436px;">vga_text</div><div class="t" style="left:123px;top:436px;letter-spacing:-0.04px;">Текстовый вывод VGA (Coreboot)</div>
  <div class="t" style="left:11px;top:467px;letter-spacing:.1px;">Параметры командной строки:</div>
  <div class="entry" style="left:208px;top:460px;width:571px;height:28px;"></div>

  <!-- scrollbar -->
  <div class="abs" style="left:790px;top:250px;width:4px;height:240px;border-radius:2px;background:#c6c8cc;"></div>
</div>

<div id="winborder"></div>
</body>
</html>
